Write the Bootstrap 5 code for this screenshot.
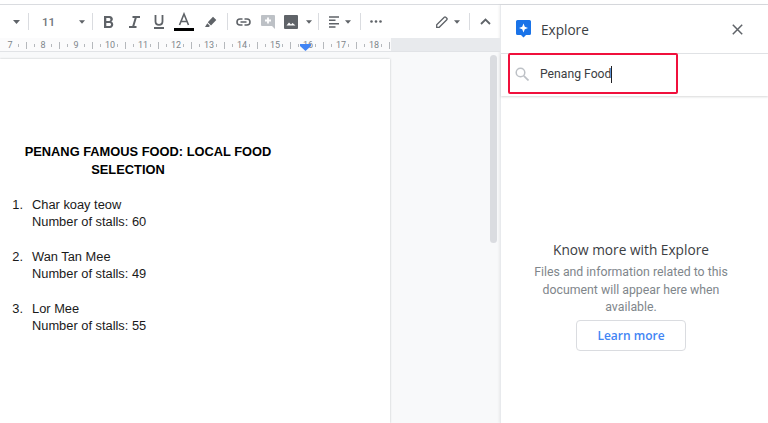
<!DOCTYPE html>
<html lang="en">
<head>
<meta charset="utf-8">
<title>Penang Famous Food</title>
<link href="https://cdn.jsdelivr.net/npm/bootstrap@5.3.0/dist/css/bootstrap.min.css" rel="stylesheet">
<style>
html,body{width:768px;height:423px;overflow:hidden;background:#fff;font-family:Roboto,sans-serif;color:#5f6368}
.shell{height:419px;margin-top:4px}
.topline{border-top:1px solid #dadce0}
.leftcol{width:500px;min-width:500px;height:418px}
.toolbar{height:33px;background:#fff;padding-left:13px}
.toolbar svg{flex:none;display:block}
.sepbar{width:1px;height:17px;background:#dadce0;flex:none}
.sizeval{width:11px;font-size:11.5px;line-height:14px;flex:none;white-space:nowrap;font-weight:500;color:#70757a}
.m6{margin-left:6px}.m7{margin-left:7px}.m8{margin-left:8px}.m9{margin-left:9px}.m10{margin-left:10px}.m11{margin-left:11px}.m13{margin-left:13px}.m14{margin-left:14px}.m15{margin-left:15px}.m26{margin-left:26px}.m54{margin-left:54px}
.rulerbar{height:14px;background:#e8eaed;border-bottom:1px solid #e1e3e6;position:relative}
.rulerwhite{width:391px;height:13px;background:#fbfbfc;overflow:hidden;flex:none}
.rulercell{width:33px;flex:none;height:13px}
.rulercell:first-child{margin-left:6px}
.rulercell span{width:8.25px;flex:none;text-align:center;font-size:9px;line-height:14px;color:#80868b}
.rnum{overflow:visible;white-space:nowrap}
.rdot::before{content:"";display:inline-block;width:1px;height:3px;background:#b5b8bc;vertical-align:middle}
.rtick::before{content:"";display:inline-block;width:1px;height:7px;background:#b5b8bc;vertical-align:middle}
.rulermark{position:absolute;left:300px;top:6px}
.docarea{height:371px;background:#f8f9fa;padding-top:7px}
.docpage{width:390px;height:364px;background:#fff;box-shadow:0 0 2px rgba(60,64,67,.3);padding-top:84px;font-family:"Liberation Sans",Arial,sans-serif;color:#1a1a1a;font-size:12.85px;line-height:17.5px}
.dochead{width:296px;font-weight:700;text-align:center;color:#000;margin-bottom:17.5px}
.headlast{padding-right:40px}
.doclist{padding-left:32px;margin:0}
.doclist li{margin-bottom:17px}
.doclist li::marker{color:#1a1a1a;content:counter(list-item) ".\2002\2009"}
.scrollthumb{width:7px;height:188px;background:#dadce0;border-radius:4px;margin-left:100px;margin-top:-4px;flex:none}
.sidepanel{width:268px;height:418px;border-left:1px solid #e8eaed;box-shadow:-1px 0 2px rgba(60,64,67,.08);background:#fff}
.panelhead{height:49px;border-bottom:1px solid #e3e5e8;padding-left:15px;padding-right:25px}
.paneltitle{font-family:"Open Sans",Roboto,sans-serif;font-size:13.6px;font-weight:500;color:#3c4043;margin-left:10px;margin-top:2px}
.searchrow{height:42px;box-shadow:0 1px 2px rgba(60,64,67,.2)}
.searchbox{width:170px;height:41px;border:2px solid #f0103c;border-radius:2px;margin-left:7px;margin-top:-1px;padding-left:5px;background:#fff}
.searchtext{font-size:12.2px;color:#3c4043;margin-left:11px;margin-top:2px;border-right:1px solid #202124;line-height:17px;white-space:nowrap}
.emptybox{width:260px;padding-top:145px;text-align:center}
.emptytitle{font-family:"Open Sans",Roboto,sans-serif;font-size:13.7px;font-weight:500;color:#3c4043;line-height:18px;margin:0 0 5px}
.emptytext{font-size:12.3px;line-height:17.5px;color:#80868b;margin:0 auto 3px;width:210px}
.learnbtn{width:110px;height:31px;padding:1px 0 0;font-size:12px;font-weight:600;color:#4285f4;border:1px solid #dadce0;border-radius:4px;background:#fff;font-family:"Open Sans",Roboto,sans-serif}
</style>
</head>
<body>
<div class="shell topline d-flex">
  <div class="leftcol d-flex flex-column">
    <div class="toolbar d-flex align-items-center">
      <svg width="7" height="4" viewBox="0 0 7 4"><path d="M0 0h7L3.5 4z" fill="#5f6368"/></svg>
      <div class="sepbar m8"></div>
      <div class="sizeval m13">11</div>
      <svg class="m26" width="6" height="4" viewBox="0 0 7 4"><path d="M0 0h7L3.5 4z" fill="#5f6368"/></svg>
      <div class="sepbar m7"></div>
      <svg class="m11" width="10" height="12" viewBox="0 0 10 12"><path fill-rule="evenodd" d="M0 0h5.500c3.500 0 4.500 4 1.800 5.500C10.500 7 9.500 12 6 12H0zM2.300 2v3h3c1.500 0 1.500-3 0-3zM2.300 7v3h3.500c1.700 0 1.700-3 0-3z" fill="#5f6368"/></svg>
      <svg class="m15" width="11" height="12" viewBox="0 0 11 12"><path d="M3.500 1H11M0 11h7.500M7 1 4 11" fill="none" stroke="#5f6368" stroke-width="2"/></svg>
      <svg class="m14" width="10" height="14" viewBox="0 0 10 14"><path d="M1.500 0v6.500c0 4.500 7 4.500 7 0V0M0 13h10" fill="none" stroke="#5f6368" stroke-width="1.800"/></svg>
      <svg class="m10" width="20" height="20" viewBox="0 0 20 20"><path d="M5.500 13 10 2l4.500 11M7 9.500h6" fill="none" stroke="#5f6368" stroke-width="1.600"/><rect y="16" width="20" height="3" fill="#000"/></svg>
      <svg class="m11" width="12" height="12" viewBox="0 0 12 12"><path d="M8 .8 11.300 4 6 9.500 2.800 6.300zM2.300 7.200l2.700 2.700-1.300 1.100H0z" fill="#5f6368"/></svg>
      <div class="sepbar m10"></div>
      <svg class="m8" width="15" height="8" viewBox="0 0 15 8"><path d="M6.500 1H4C0 1 0 7 4 7h2.500M8.500 1H11c4 0 4 6 0 6H8.500M4.500 4h6" fill="none" stroke="#5f6368" stroke-width="1.600"/></svg>
      <svg class="m10" width="14" height="14" viewBox="0 0 14 14"><path d="M1 0h12a1 1 0 0 1 1 1v13l-3-3H1a1 1 0 0 1-1-1V1a1 1 0 0 1 1-1z" fill="#bdc1c6"/><path d="M7 2.500v6M4 5.500h6" stroke="#fff" stroke-width="1.800"/></svg>
      <svg class="m9" width="14" height="14" viewBox="0 0 14 14"><rect width="14" height="14" rx="1" fill="#5f6368"/><path d="M2.500 10.500 5 7.500l2 2 1.500-1.500 3 2.500z" fill="#fff"/></svg>
      <svg class="m8" width="6" height="4" viewBox="0 0 7 4"><path d="M0 0h7L3.500 4z" fill="#5f6368"/></svg>
      <div class="sepbar m6"></div>
      <svg class="m10" width="10" height="12" viewBox="0 0 10 12"><path d="M0 1h10M0 4.300h6.500M0 7.700h10M0 11h6.500" stroke="#5f6368" stroke-width="1.400"/></svg>
      <svg class="m6" width="6" height="4" viewBox="0 0 7 4"><path d="M0 0h7L3.500 4z" fill="#5f6368"/></svg>
      <div class="sepbar m9"></div>
      <svg class="m9" width="12" height="3" viewBox="0 0 12 3"><circle cx="1.500" cy="1.500" r="1.300" fill="#5f6368"/><circle cx="6" cy="1.500" r="1.300" fill="#5f6368"/><circle cx="10.500" cy="1.500" r="1.300" fill="#5f6368"/></svg>
      <svg class="m54" width="12" height="12" viewBox="0 0 12 12"><path d="M.7 11.300V8.800L8.300 1.200a1 1 0 0 1 1.400 0l1.100 1.100a1 1 0 0 1 0 1.400L3.200 11.300z" fill="none" stroke="#5f6368" stroke-width="1.300"/></svg>
      <svg class="m6" width="6" height="4" viewBox="0 0 7 4"><path d="M0 0h7L3.500 4z" fill="#5f6368"/></svg>
      <div class="sepbar m9"></div>
      <svg class="m10" width="11" height="7" viewBox="0 0 11 7"><path d="M1 6 5.500 1.500 10 6" fill="none" stroke="#5f6368" stroke-width="1.800"/></svg>
    </div>
    <div class="rulerbar">
      <div class="rulerwhite d-flex">
        <div class="rulercell d-flex"><span class="rnum">7</span><span class="rdot"></span><span class="rtick"></span><span class="rdot"></span></div>
        <div class="rulercell d-flex"><span class="rnum">8</span><span class="rdot"></span><span class="rtick"></span><span class="rdot"></span></div>
        <div class="rulercell d-flex"><span class="rnum">9</span><span class="rdot"></span><span class="rtick"></span><span class="rdot"></span></div>
        <div class="rulercell d-flex"><span class="rnum">10</span><span class="rdot"></span><span class="rtick"></span><span class="rdot"></span></div>
        <div class="rulercell d-flex"><span class="rnum">11</span><span class="rdot"></span><span class="rtick"></span><span class="rdot"></span></div>
        <div class="rulercell d-flex"><span class="rnum">12</span><span class="rdot"></span><span class="rtick"></span><span class="rdot"></span></div>
        <div class="rulercell d-flex"><span class="rnum">13</span><span class="rdot"></span><span class="rtick"></span><span class="rdot"></span></div>
        <div class="rulercell d-flex"><span class="rnum">14</span><span class="rdot"></span><span class="rtick"></span><span class="rdot"></span></div>
        <div class="rulercell d-flex"><span class="rnum">15</span><span class="rdot"></span><span class="rtick"></span><span class="rdot"></span></div>
        <div class="rulercell d-flex"><span class="rnum">16</span><span class="rdot"></span><span class="rtick"></span><span class="rdot"></span></div>
        <div class="rulercell d-flex"><span class="rnum">17</span><span class="rdot"></span><span class="rtick"></span><span class="rdot"></span></div>
        <div class="rulercell d-flex"><span class="rnum">18</span><span class="rdot"></span><span class="rtick"></span><span class="rdot"></span></div>
      </div>
      <svg class="rulermark" width="11" height="7" viewBox="0 0 11 7"><path d="M0 0h11v2L5.500 7 0 2z" fill="#4285f4"/></svg>
    </div>
    <div class="docarea d-flex">
      <div class="docpage flex-none">
        <div class="dochead"><div>PENANG FAMOUS FOOD: LOCAL FOOD</div><div class="headlast">SELECTION</div></div>
        <ol class="doclist">
          <li>Char koay teow<br>Number of stalls: 60</li>
          <li>Wan Tan Mee<br>Number of stalls: 49</li>
          <li>Lor Mee<br>Number of stalls: 55</li>
        </ol>
      </div>
      <div class="scrollthumb"></div>
    </div>
  </div>
  <aside class="sidepanel d-flex flex-column">
    <div class="panelhead d-flex align-items-center">
      <svg width="15" height="18" viewBox="0 0 15 18"><path d="M1.500 0h12A1.500 1.500 0 0 1 15 1.500v12a1.500 1.500 0 0 1-1.500 1.500H10l-2.500 2.500L5 15H1.500A1.500 1.500 0 0 1 0 13.500v-12A1.500 1.500 0 0 1 1.500 0z" fill="#1a73e8"/><path d="M7.500 3.500 8.800 6.700 12 8 8.800 9.300 7.500 12.500 6.200 9.300 3 8l3.200-1.300z" fill="#fff"/></svg>
      <div class="paneltitle">Explore</div>
      <svg class="ms-auto" width="11" height="11" viewBox="0 0 11 11"><path d="M.8.800l9.400 9.400M10.200.800.800 10.200" stroke="#5f6368" stroke-width="1.500"/></svg>
    </div>
    <div class="searchrow">
      <div class="searchbox d-flex align-items-center">
        <svg width="14" height="14" viewBox="0 0 14 14"><circle cx="5.500" cy="5.500" r="4.300" fill="none" stroke="#bdc1c6" stroke-width="1.500"/><path d="M8.800 8.800 13.500 13.500" stroke="#bdc1c6" stroke-width="1.700"/></svg>
        <span class="searchtext">Penang Food</span>
      </div>
    </div>
    <div class="emptybox">
      <h2 class="emptytitle">Know more with Explore</h2>
      <p class="emptytext">Files and information related to this document will appear here when available.</p>
      <button type="button" class="btn learnbtn">Learn more</button>
    </div>
  </aside>
</div>
<script src="https://cdn.jsdelivr.net/npm/bootstrap@5.3.0/dist/js/bootstrap.bundle.min.js"></script>
</body>
</html>
